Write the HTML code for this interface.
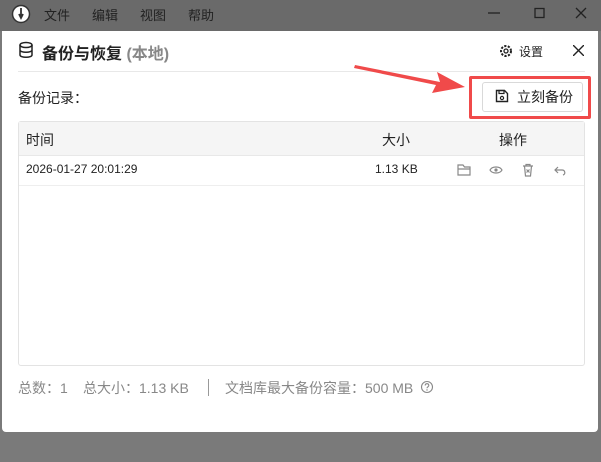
<!DOCTYPE html>
<html><head><meta charset="utf-8"><style>
body{margin:0;width:601px;height:462px;overflow:hidden;background:#7a7a7a;font-family:"Liberation Sans","Noto Sans CJK SC",sans-serif;position:relative}
.tb{position:absolute;left:0;top:0;width:601px;height:31px;background:#6a6a6a;color:#222;font-size:13px}
.tb span{position:absolute;top:5px}
.modal{position:absolute;left:2px;top:31px;width:596px;height:401px;background:#fff;border-radius:0 0 4px 4px}
.a{position:absolute}
.hd{background:#f5f5f5}
</style></head><body>
<div class="tb">
<svg class="a" style="left:11px;top:4px" width="20" height="20"><circle cx="10" cy="10" r="8.5" fill="#fff" stroke="#333" stroke-width="1.5"/><path d="M10 4v9M8 10l2 4 2-4" stroke="#333" stroke-width="1.8" fill="none"/></svg>
<span style="left:44px">文件</span><span style="left:92px">编辑</span><span style="left:140px">视图</span><span style="left:188px">帮助</span>
<svg class="a" style="left:488px;top:7px" width="100" height="14"><path d="M0 6h12" stroke="#222" stroke-width="1.3"/><rect x="47" y="1.5" width="9" height="9" fill="none" stroke="#222" stroke-width="1.3"/><path d="M88 1l10 10M98 1l-10 10" stroke="#222" stroke-width="1.3"/></svg>
</div>
<div class="modal"></div>
<svg class="a" style="left:18px;top:41px" width="16" height="18"><ellipse cx="8" cy="4" rx="6" ry="2.5" fill="none" stroke="#222" stroke-width="1.5"/><path d="M2 4v10c0 3 12 3 12 0V4M2 9c0 3 12 3 12 0" fill="none" stroke="#222" stroke-width="1.5"/></svg>
<div class="a" style="left:42px;top:40px;font-size:16px;font-weight:bold;color:#222">备份与恢复 <span style="color:#888">(本地)</span></div>
<svg class="a" style="left:499px;top:44px" width="14" height="14"><circle cx="7" cy="7" r="5" fill="none" stroke="#222" stroke-width="2" stroke-dasharray="2.2 1.4"/><circle cx="7" cy="7" r="2" fill="none" stroke="#222" stroke-width="1.3"/></svg>
<div class="a" style="left:519px;top:43px;font-size:12px;color:#222">设置</div>
<svg class="a" style="left:573px;top:45px" width="11" height="11"><path d="M0 0l11 11M11 0L0 11" stroke="#222" stroke-width="1.4"/></svg>
<div class="a" style="left:18px;top:71px;width:567px;height:1px;background:#e8e8e8"></div>
<div class="a" style="left:18px;top:88px;font-size:14px;color:#222">备份记录：</div>
<svg class="a" style="left:340px;top:60px" width="130" height="35"><path d="M15 5L100 22l-3-10 28 15-33 6 4-8L14 8z" fill="#f04a4a"/></svg>
<div class="a" style="left:469px;top:76px;width:116px;height:37px;border:3px solid #f04a4a;border-radius:2px"></div>
<div class="a" style="left:482px;top:82px;width:99px;height:28px;border:1px solid #d9d9d9;border-radius:3px;font-size:14px;color:#222;line-height:28px;text-indent:34px">立刻备份</div>
<svg class="a" style="left:495px;top:89px" width="14" height="14"><path d="M1.5 1.5h8l3 3v8h-11z" fill="none" stroke="#222" stroke-width="1.4"/><rect x="4" y="1.5" width="5" height="3" fill="none" stroke="#222" stroke-width="1.2"/><circle cx="7" cy="9" r="1.6" fill="none" stroke="#222" stroke-width="1.2"/></svg>
<div class="a" style="left:18px;top:121px;width:565px;height:243px;border:1px solid #e3e3e3;border-radius:3px"></div>
<div class="a hd" style="left:19px;top:122px;width:565px;height:33px;border-bottom:1px solid #e8e8e8"></div>
<div class="a" style="left:26px;top:130px;font-size:14px;color:#222">时间</div>
<div class="a" style="left:382px;top:130px;font-size:14px;color:#222">大小</div>
<div class="a" style="left:499px;top:130px;font-size:14px;color:#222">操作</div>
<div class="a" style="left:19px;top:185px;width:565px;height:1px;background:#eee"></div>
<div class="a" style="left:26px;top:162px;font-size:12px;color:#222">2026-01-27 20:01:29</div>
<div class="a" style="left:375px;top:162px;font-size:12px;color:#222">1.13 KB</div>
<svg class="a" style="left:457px;top:163px" width="120" height="14"><path d="M1 2h5l1.5 2H13v8H1z M1 6h12" fill="none" stroke="#888" stroke-width="1.2"/><path d="M33 7c2-4 10-4 12 0-2 4-10 4-12 0z" fill="none" stroke="#888" stroke-width="1.2"/><circle cx="39" cy="7" r="1.6" fill="#888"/><path d="M66 3h10M69 3V1.5h4V3M67.5 3l1 10h5l1-10M69.5 6.5l3 3M72.5 6.5l-3 3" fill="none" stroke="#888" stroke-width="1.2"/><path d="M101 4l-3 3 3 3M98 7h7c3 0 4 4 1 5" fill="none" stroke="#888" stroke-width="1.2"/></svg>
<div class="a" style="left:18px;top:378px;font-size:14px;color:#888;white-space:pre">总数：1<span style="position:absolute;left:65px">总大小：1.13 KB</span><span style="position:absolute;left:190px;top:1px;width:1px;height:17px;background:#999"></span><span style="position:absolute;left:207px">文档库最大备份容量：500 MB</span></div>
<svg class="a" style="left:420px;top:380px" width="14" height="14"><circle cx="7" cy="7" r="5.5" fill="none" stroke="#888" stroke-width="1.1"/><path d="M5.2 5.5c0-2.4 3.6-2.4 3.6 0 0 1.3-1.8 1.3-1.8 2.7" fill="none" stroke="#888" stroke-width="1.1"/><circle cx="7" cy="10" r=".7" fill="#888"/></svg>
</body></html>
